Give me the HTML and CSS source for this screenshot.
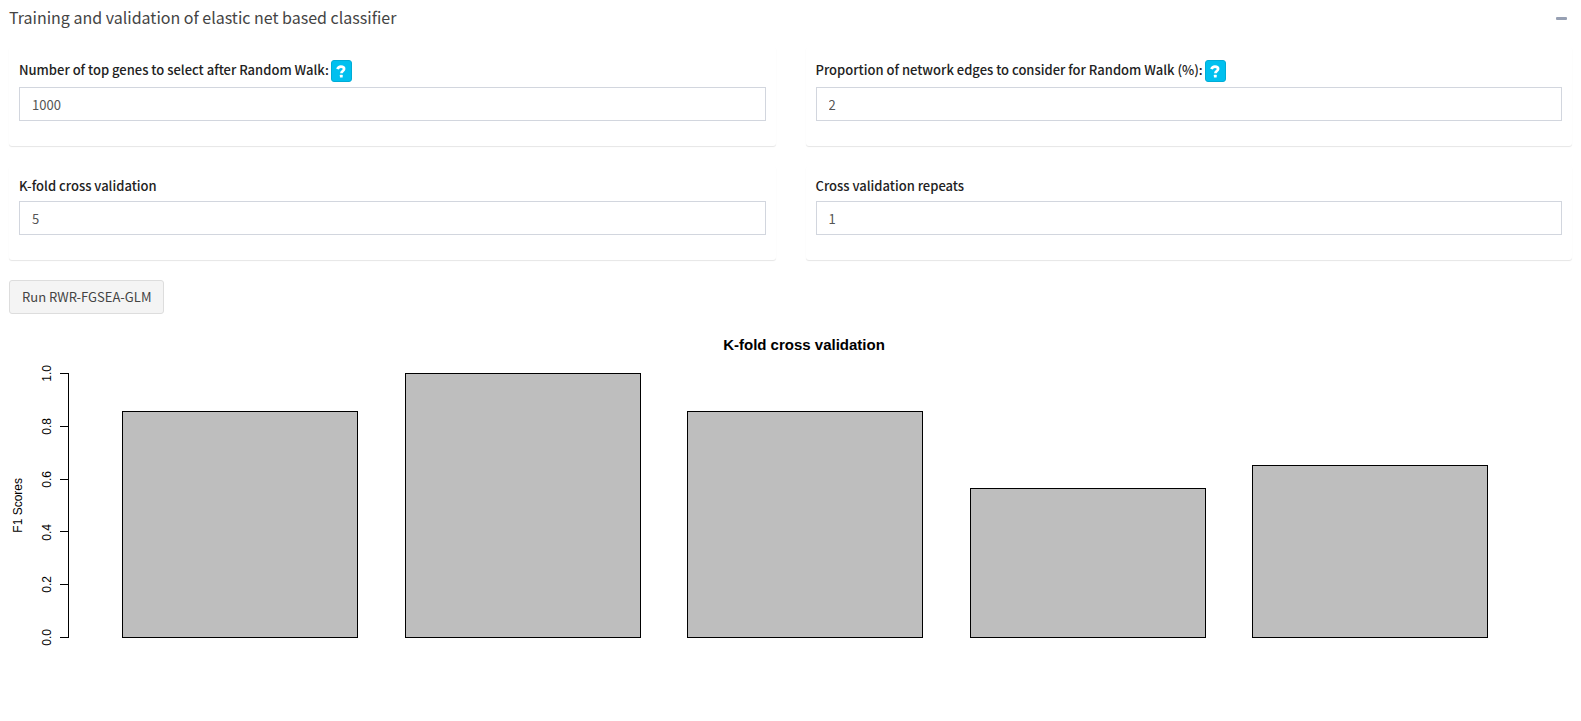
FILE: index.html
```html
<!DOCTYPE html>
<html lang="en">
<head>
<meta charset="utf-8">
<title>Elastic net classifier</title>
<link rel="stylesheet" href="styles.css">
</head>
<body>
<section class="box">
  <header class="box-header">
    <h3 class="box-title">Training and validation of elastic net based classifier</h3>
    <button class="collapse" type="button" aria-label="Collapse">
      <svg width="11" height="3" viewBox="0 0 11 3" aria-hidden="true"><rect width="11" height="3" rx="1" fill="#97a0b3"/></svg>
    </button>
  </header>
  <div class="fields">
    <div class="card">
      <div class="label-row label-row-help">
        <label for="genes">Number of top genes to select after Random Walk:</label>
        <button class="help" type="button" aria-label="Help on top genes">
          <svg width="10" height="13" viewBox="0 0 10 13" aria-hidden="true"><path d="M1.500 4.200C2 2.500 3.200 1.600 4.900 1.600c1.900 0 3.200 1 3.200 2.400 0 2-2.700 2-2.700 4.200" fill="none" stroke="#fff" stroke-width="2.700"/><rect x="3.900" y="9.700" width="2.800" height="2.800" rx=".5" fill="#fff"/></svg>
        </button>
      </div>
      <input class="control" id="genes" type="text" value="1000">
    </div>
    <div class="card">
      <div class="label-row label-row-help">
        <label for="edges">Proportion of network edges to consider for Random Walk (%):</label>
        <button class="help" type="button" aria-label="Help on network edges">
          <svg width="10" height="13" viewBox="0 0 10 13" aria-hidden="true"><path d="M1.500 4.200C2 2.500 3.200 1.600 4.900 1.600c1.900 0 3.200 1 3.200 2.400 0 2-2.700 2-2.700 4.200" fill="none" stroke="#fff" stroke-width="2.700"/><rect x="3.900" y="9.700" width="2.800" height="2.800" rx=".5" fill="#fff"/></svg>
        </button>
      </div>
      <input class="control" id="edges" type="text" value="2">
    </div>
    <div class="card">
      <div class="label-row"><label for="folds">K-fold cross validation</label></div>
      <input class="control" id="folds" type="text" value="5">
    </div>
    <div class="card">
      <div class="label-row"><label for="repeats">Cross validation repeats</label></div>
      <input class="control" id="repeats" type="text" value="1">
    </div>
  </div>
  <button class="run" type="button">Run RWR-FGSEA-GLM</button>
  <figure class="chart">
    <figcaption class="chart-title">K-fold cross validation</figcaption>
    <div class="axis-name"><span class="vertical">F1 Scores</span></div>
    <div class="axis">
      <div class="tick"><span class="vertical">1.0</span></div>
      <div class="tick"><span class="vertical">0.8</span></div>
      <div class="tick"><span class="vertical">0.6</span></div>
      <div class="tick"><span class="vertical">0.4</span></div>
      <div class="tick"><span class="vertical">0.2</span></div>
      <div class="tick"><span class="vertical">0.0</span></div>
    </div>
    <div class="plot">
      <div class="bars">
        <div class="bar" style="height:85.7%"></div>
        <div class="bar" style="height:100%"></div>
        <div class="bar" style="height:85.7%"></div>
        <div class="bar" style="height:56.6%"></div>
        <div class="bar" style="height:65.3%"></div>
      </div>
    </div>
  </figure>
</section>
</body>
</html>
```
FILE: styles.css
```css
* { box-sizing: border-box; }

body {
  margin: 0;
  background: #fff;
  color: #333;
  font-family: "Noto Sans CJK SC", "Open Sans", sans-serif;
  font-size: 13px;
  line-height: 20px;
}

button, input { font: inherit; }

.box { padding: 0 9px; }

.box-header {
  display: flex;
  align-items: center;
  justify-content: space-between;
  height: 37px;
  margin-bottom: 10px;
}

.box-title {
  margin: 0;
  padding-bottom: 3px;
  color: #444;
  font-size: 16px;
  font-weight: 400;
}

.collapse {
  display: flex;
  padding: 5px;
  border: 0;
  background: transparent;
}

.fields {
  display: grid;
  grid-template-columns: 1fr 1fr;
  gap: 20px 30px;
}

.card {
  padding: 10px 10px 25px;
  border-radius: 3px;
  background: #fff;
  box-shadow: 0 1px 1px rgba(0, 0, 0, 0.1);
}

.label-row {
  display: flex;
  gap: 2px;
  height: 20px;
  margin-bottom: 5px;
  color: #222;
  font-weight: 500;
}

.label-row-help {
  height: 25px;
  align-items: center;
}

.help {
  display: flex;
  align-items: center;
  align-self: flex-end;
  justify-content: center;
  width: 21px;
  height: 22px;
  padding: 0;
  border: 1px solid #00acd6;
  border-radius: 3px;
  background: #00c0ef;
}

.control {
  display: block;
  width: 100%;
  height: 34px;
  padding: 6px 12px;
  border: 1px solid #d2d6de;
  border-radius: 0;
  background: #fff;
  color: #555;
}

.run {
  display: block;
  height: 34px;
  margin-top: 20px;
  padding: 6px 12px;
  border: 1px solid #ddd;
  border-radius: 3px;
  background: #f4f4f4;
  color: #444;
}

.chart {
  display: grid;
  grid-template-columns: 17px 43px 1fr;
  grid-template-rows: 59px 265px;
  margin: 0;
  padding: 0 29px 76px 0;
  color: #000;
  font: 12px/14px "Liberation Sans", Arial, sans-serif;
}

.chart-title {
  grid-column: 3;
  align-self: center;
  padding: 2px 4px 0 0;
  text-align: center;
  font-size: 15px;
  font-weight: 700;
  line-height: 16px;
}

.axis-name {
  grid-column: 1;
  display: flex;
  align-items: center;
  justify-content: center;
}

.vertical {
  writing-mode: vertical-rl;
  transform: rotate(180deg);
}

.axis {
  display: flex;
  flex-direction: column;
  justify-content: space-between;
  border-right: 1px solid #000;
}

.tick {
  display: flex;
  align-items: center;
  justify-content: flex-end;
  gap: 6px;
  height: 1px;
}

.tick::after {
  content: "";
  width: 8px;
  height: 1px;
  background: #000;
}

.plot { padding: 0 3.7% 0 3.6%; }

.bars {
  display: grid;
  grid-template-columns: repeat(5, 1fr);
  column-gap: 3.4%;
  align-items: end;
  height: 100%;
}

.bar {
  border: 1px solid #000;
  background: #bebebe;
}
```
